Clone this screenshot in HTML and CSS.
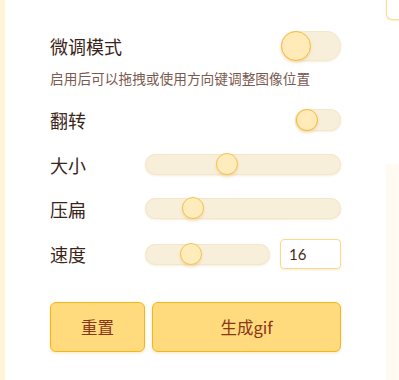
FILE: index.html
```html
<!DOCTYPE html>
<html lang="zh">
<head>
<meta charset="utf-8">
<link rel="stylesheet" href="styles.css">
</head>
<body>
<div class="page">
  <div class="strip"></div>
  <main class="panel">
    <div class="row r1">
      <span class="label">微调模式</span>
      <span class="toggle big"><span class="knob"></span></span>
    </div>
    <p class="desc">启用后可以拖拽或使用方向键调整图像位置</p>
    <div class="row r2">
      <span class="label">翻转</span>
      <span class="toggle small"><span class="knob"></span></span>
    </div>
    <div class="row r3">
      <span class="label w">大小</span>
      <div class="track"><span class="thumb" style="left:71px"></span></div>
    </div>
    <div class="row r4">
      <span class="label w">压扁</span>
      <div class="track"><span class="thumb" style="left:37px"></span></div>
    </div>
    <div class="row r5">
      <span class="label w">速度</span>
      <div class="track short"><span class="thumb" style="left:35px"></span></div>
      <div class="num">16</div>
    </div>
    <div class="btns">
      <button class="btn reset">重置</button>
      <button class="btn gen">生成gif</button>
    </div>
  </main>
  <aside class="side">
    <div class="card"></div>
    <div class="sidepanel"></div>
  </aside>
</div>
</body>
</html>
```
FILE: styles.css
```css
html, body {
  margin: 0;
  padding: 0;
  background: #ffffff;
  height: 100%;
  overflow: hidden;
}
body {
  font-family: "Noto Sans CJK SC", "Noto Sans", sans-serif;
  color: #3a2418;
}
.page {
  display: flex;
  height: 380px;
  width: 399px;
  overflow: hidden;
}
.strip {
  width: 5px;
  flex: none;
  background: #fff5d6;
}
.panel {
  width: 336px;
  flex: none;
  padding: 31px 0 0 45px;
  box-sizing: content-box;
}
.side {
  flex: 1;
  min-width: 0;
  display: flex;
  flex-direction: column;
}
.card {
  height: 28px;
  margin-top: -10px;
  border: 1px solid #fddc94;
  border-right: none;
  border-radius: 0 0 0 6px;
  box-shadow: 0 1px 2px rgba(240, 200, 120, 0.35);
}
.sidepanel {
  margin-top: 144px;
  flex: 1;
  background: #fffaf2;
}
.row {
  display: flex;
  align-items: center;
  width: 291px;
}
.label {
  font-size: 18px;
  line-height: 24px;
}
.label.w {
  width: 95px;
  flex: none;
}
.r1 { height: 30px; justify-content: space-between; }
.desc {
  margin: 8px 0 0 0;
  font-size: 13.7px;
  line-height: 18px;
  color: #7a5a50;
}
.r2 { margin-top: 22px; height: 22px; justify-content: space-between; }
.r3 { margin-top: 23px; height: 21px; }
.r4 { margin-top: 23px; height: 21px; }
.r5 { margin-top: 20px; height: 30px; }

.toggle {
  position: relative;
  display: block;
  background: #f8efdb;
  border-radius: 20px;
  box-shadow: inset 0 0 0 1px #f4e8cc, 0 1px 2px rgba(230, 200, 140, 0.3);
}
.toggle.big { width: 60px; height: 30px; }
.toggle.small { width: 46px; height: 22px; }
.knob {
  position: absolute;
  left: 0;
  top: 0;
  box-sizing: border-box;
  border-radius: 50%;
  background: #ffeab8;
  border: 1.5px solid #f6bb3c;
  box-shadow: 0 2px 3px rgba(220, 170, 70, 0.3);
}
.big .knob { width: 30px; height: 30px; }
.small .knob { width: 22px; height: 22px; left: 1px; }

.track {
  position: relative;
  width: 196px;
  height: 21px;
  background: #f8efdb;
  border-radius: 11px;
  box-shadow: inset 0 0 0 1px #f3e6c9, 0 1px 2px rgba(230, 200, 140, 0.3);
}
.track.short { width: 125px; }
.thumb {
  position: absolute;
  top: -1px;
  width: 22px;
  height: 22px;
  box-sizing: border-box;
  border-radius: 50%;
  background: #ffecbd;
  border: 1.5px solid #f6c34c;
  box-shadow: 0 2px 3px rgba(220, 170, 70, 0.3);
}
.num {
  margin-left: 10px;
  width: 61px;
  height: 30px;
  box-sizing: border-box;
  border: 1px solid #fcd88c;
  border-radius: 4px;
  padding-left: 8px;
  font-family: "Lato", "Noto Sans", sans-serif;
  font-size: 15px;
  line-height: 28px;
  color: #4a2a1a;
  box-shadow: 0 1px 2px rgba(240, 200, 120, 0.35);
}
.btns {
  display: flex;
  gap: 7px;
  margin-top: 33px;
  width: 291px;
}
.btn {
  height: 50px;
  background: #ffdb7e;
  border: 1px solid #f6b51c;
  border-radius: 6px;
  font-family: "Noto Sans CJK SC", "Noto Sans", sans-serif;
  font-size: 16.5px;
  color: #8a3618;
  padding: 0;
  box-shadow: 0 1px 3px rgba(230, 170, 60, 0.3);
}
.reset { width: 95px; }
.gen { flex: 1; }
```
